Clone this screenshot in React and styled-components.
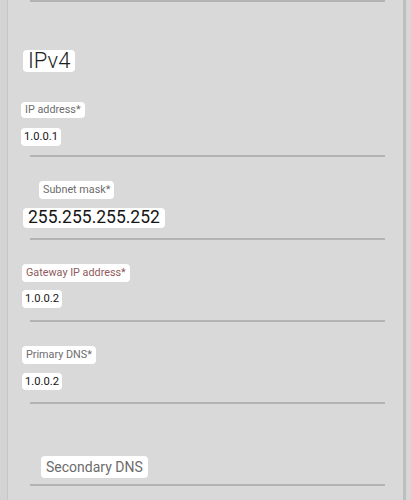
import React from 'react'
import styled, { createGlobalStyle } from 'styled-components'

const GlobalStyle = createGlobalStyle`
  html, body {
    margin: 0;
    padding: 0;
    background: #d7d7d7;
  }
`;

const Frame = styled.div`
  width: 396px;
  height: 500px;
  overflow: hidden;
  background: #d9d9d9;
  border-left: 7px solid #d3d3d3;
  box-shadow: inset 1px 0 0 #c6c6c6;
  border-right: 3px solid #bebebe;
  font-family: Roboto, "Noto Sans", sans-serif;
  display: flex;
  flex-direction: column;
  align-items: flex-start;
`;

const Divider = styled.div`
  margin-top: ${p => p.$top || 0}px;
  margin-left: 23px;
  width: 355px;
  height: 2px;
  background: #b3b3b3;
  flex-shrink: 0;
`;

const Chip = styled.div`
  background: #ffffff;
  border-radius: 4px;
  line-height: 1;
  display: flex;
  align-items: center;
  white-space: nowrap;
`;

const Heading = styled(Chip)`
  margin-top: 48px;
  margin-left: 16px;
  height: 22px;
  padding: 0 5px;
  font-size: 22px;
  font-weight: 300;
  color: #1e1e1e;
`;

const Label = styled(Chip)`
  margin-top: ${p => p.$top}px;
  margin-left: ${p => p.$left}px;
  height: ${p => p.$h}px;
  padding: 0 ${p => (p.$big ? 5 : 4)}px;
  font-size: ${p => (p.$big ? 14 : 10.8)}px;
  color: ${p => (p.$accent ? '#8e5a5a' : '#6c6c6c')};
`;

const Value = styled(Chip)`
  margin-top: ${p => p.$top}px;
  margin-left: ${p => p.$left}px;
  height: ${p => p.$h}px;
  padding: 0 ${p => (p.$big ? 5 : 3)}px;
  font-size: ${p => (p.$big ? 17.5 : 11.2)}px;
  color: #151515;
`;

export default function App() {
  return (
    <>
      <GlobalStyle />
      <Frame>
        <Divider />
        <Heading>IPv4</Heading>

        <Label $top={30} $left={14} $h={16}>IP address*</Label>
        <Value $top={10} $left={14} $h={18}>1.0.0.1</Value>
        <Divider $top={9} />

        <Label $top={24} $left={32} $h={18}>Subnet mask*</Label>
        <Value $top={9} $left={16} $h={20} $big>255.255.255.252</Value>
        <Divider $top={10} />

        <Label $top={24} $left={15} $h={18} $accent>Gateway IP address*</Label>
        <Value $top={8} $left={15} $h={18}>1.0.0.2</Value>
        <Divider $top={12} />

        <Label $top={24} $left={15} $h={18}>Primary DNS*</Label>
        <Value $top={9} $left={15} $h={17}>1.0.0.2</Value>
        <Divider $top={12} />

        <Label $top={52} $left={34} $h={22} $big>Secondary DNS</Label>
        <Divider $top={6} />
      </Frame>
    </>
  )
}
